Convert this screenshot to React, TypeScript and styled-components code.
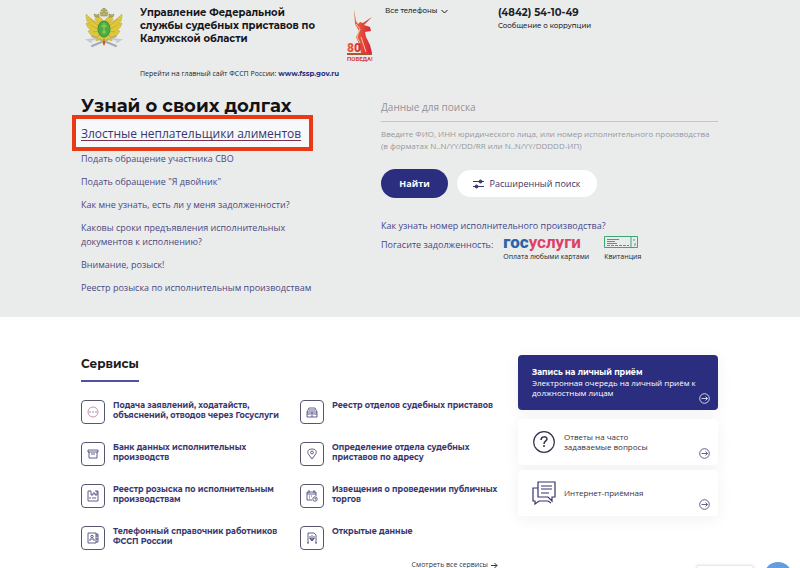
import React from "react";
import styled, { createGlobalStyle } from "styled-components";

const navy = "#2b2d7f";
const ink = "#39376e";
const body = '"Open Sans", "Noto Sans", sans-serif';
const display = 'Montserrat, Inter, "Noto Sans", sans-serif';

const GlobalStyle = createGlobalStyle`
  * { box-sizing: border-box; }
  body { margin: 0; background: #fff; font-family: ${body}; color: #1d1d25; }
  a { color: inherit; text-decoration: none; }
  button, input { font-family: inherit; }
  h1, h2, h3, p, ul { margin: 0; padding: 0; }
  ul { list-style: none; }
  svg { display: block; flex: none; }
`;

const Page = styled.div`
  height: 100vh;
  overflow: hidden;
`;

const Top = styled.div`
  background: #eaecec;
  padding: 0 82px 22px 81px;
`;

const Header = styled.header`
  display: grid;
  grid-template-columns: 59px 203px 42px 113px 1fr;
  align-items: start;
  padding-top: 6px;
`;

const Emblem = styled.div`
  padding: 2px 0 0 4px;
`;

const OfficeName = styled.h2`
  max-width: 181px;
  font: 700 10px/13px ${display};
  color: #15151a;
`;

const MainSite = styled.p`
  margin-top: 23px;
  font-size: 7px;
  line-height: 12px;
  white-space: nowrap;
  a { font: 700 7px/12px ${display}; color: ${navy}; }
`;

const PhonesButton = styled.button`
  display: flex;
  align-items: center;
  gap: 3px;
  padding: 0;
  border: 0;
  background: none;
  font: 500 7px/10px ${display};
  color: #1d1d25;
`;

const Phone = styled.a`
  display: block;
  font: 700 10px/13px ${display};
`;

const SmallLink = styled.a`
  display: block;
  font: 500 7px/14px ${display};
`;

const Hero = styled.main`
  display: grid;
  grid-template-columns: 300px 1fr;
  padding-top: 12px;
`;

const HeroTitle = styled.h1`
  font: 700 18px/28px ${display};
  color: #131316;
  white-space: nowrap;
`;

const Highlight = styled.a`
  display: block;
  width: fit-content;
  margin: -5px 0 0 -9px;
  padding: 6px 8px 4px 5px;
  border: 4px solid #e93a17;
  background: #f7f8f9;
  font-size: 12px;
  line-height: 18px;
  color: ${ink};
  text-decoration: underline;
  text-decoration-color: #783352;
  text-underline-offset: 2px;
  white-space: nowrap;
`;

const LinkList = styled.ul`
  display: grid;
  gap: 9px;
  padding-top: 1px;
  font-size: 9px;
  line-height: 14px;
  color: #4a487f;
`;

const LinkItem = styled.li`
  max-width: 240px;
`;

const SearchInput = styled.input`
  display: block;
  width: 100%;
  height: 30px;
  padding: 0;
  border: 0;
  border-bottom: 1px solid #c6c6c9;
  border-radius: 0;
  background: #ebebeb;
  font-size: 10px;
  &::placeholder { color: #939398; opacity: 1; }
`;

const Hint = styled.p`
  margin-top: 6px;
  font-size: 8px;
  line-height: 12px;
  color: #96979b;
`;

const Buttons = styled.div`
  display: flex;
  align-items: center;
  gap: 9px;
  margin-top: 17px;
`;

const SearchButton = styled.button<{ $primary?: boolean }>`
  display: flex;
  align-items: center;
  justify-content: center;
  gap: 5px;
  width: ${(p) => (p.$primary ? 67 : 140)}px;
  height: ${(p) => (p.$primary ? 29 : 27)}px;
  padding: 0;
  border: 0;
  border-radius: 15px;
  background: ${(p) => (p.$primary ? navy : "#fff")};
  color: ${(p) => (p.$primary ? "#fff" : ink)};
  font-size: 9px;
  font-weight: ${(p) => (p.$primary ? 700 : 400)};
`;

const Debt = styled.div`
  margin-top: 21px;
  font-size: 9px;
  line-height: 14px;
  color: #47478a;
`;

const PayRow = styled.div`
  display: flex;
  align-items: flex-start;
  gap: 10px;
  padding-top: 2px;
  white-space: nowrap;
`;

const PayLabel = styled.span`
  padding-top: 3px;
`;

const PayOption = styled.a`
  display: grid;
  grid-template-rows: 17px 10px;
  margin-right: 5px;
  color: #1d1d25;
  font-size: 7px;
  line-height: 10px;
`;

const Gosuslugi = styled.span`
  font: 700 17px/14px Roboto, sans-serif;
  color: #dd3f66;
  b { color: #2c64a8; }
`;

const Lower = styled.section`
  display: grid;
  grid-template-columns: 1fr 200px;
  gap: 20px;
  padding: 38px 82px 0 81px;
`;

const SectionTitle = styled.h2`
  width: fit-content;
  padding-bottom: 8px;
  border-bottom: 2px solid #5054a0;
  font: 700 12px/17px ${display};
  color: #1c1c20;
`;

const Services = styled.ul`
  display: grid;
  grid-template-columns: 219px 1fr;
  row-gap: 18px;
  padding-top: 18px;
`;

const Service = styled.li`
  display: grid;
  grid-template-columns: 24px 1fr;
  gap: 8px;
  height: 24px;
  color: ${ink};
`;

const IconBox = styled.span`
  display: grid;
  place-items: center;
  width: 24px;
  height: 24px;
  border: 1px solid #57566f;
  border-radius: 4px;
`;

const ServiceLink = styled.a`
  font: 700 8px/10px ${display};
  white-space: pre-line;
`;

const AllServices = styled.a`
  display: flex;
  align-items: center;
  justify-content: flex-end;
  gap: 3px;
  margin-top: 9px;
  font-size: 7px;
  line-height: 12px;
  color: #33334a;
`;

const Cards = styled.aside`
  display: flex;
  flex-direction: column;
`;

const Card = styled.a<{ $dark?: boolean }>`
  display: flex;
  align-items: center;
  gap: ${(p) => (p.$dark ? 0 : 8)}px;
  min-height: ${(p) => (p.$dark ? 55 : 46)}px;
  margin-bottom: ${(p) => (p.$dark ? 9 : 5)}px;
  padding: 0 8px 0 14px;
  border-radius: 4px;
  background: ${(p) => (p.$dark ? navy : "#fff")};
  color: ${(p) => (p.$dark ? "#fff" : "#33333b")};
  box-shadow: 0 3px 16px rgba(30, 30, 60, 0.06);
  font-size: 8px;
  line-height: 10px;
`;

const CardText = styled.span`
  flex: 1;
  white-space: pre-line;
  strong { display: block; font: 700 8px/11px ${display}; }
`;

const CardArrow = styled.span`
  align-self: flex-end;
  padding-bottom: 6px;
  color: ${(p) => p.color};
`;

const ChatDock = styled.aside`
  position: fixed;
  right: 8px;
  bottom: -22px;
  display: flex;
  gap: 10px;
`;

const ChatBubble = styled.div`
  width: 58px;
  height: 25px;
  margin-top: 3px;
  border: 1px solid #e8e8eb;
  border-radius: 3px;
  background: #fff;
  box-shadow: 0 0 3px rgba(0, 0, 0, 0.12);
`;

const ChatButton = styled.button`
  width: 28px;
  height: 28px;
  border: 0;
  border-radius: 50%;
  background: #609ee0;
`;

const Eagle = () => (
  <svg width="38" height="41" viewBox="0 0 38 41" aria-label="ФССП">
    <g stroke="#a6aab0" strokeWidth="2" strokeLinecap="round">
      <path d="M31 28 7 38M7 28l24 10" />
      <path d="m12 31-9 1 3 2M26 31l9 1-3 2" stroke="#c5c8cb" fill="none" />
    </g>
    <g fill="#ddc83c" stroke="#b79f34" strokeWidth=".5">
      <path d="M16 14C10 15 5 10 1 6c0 5 1 8 3 10-1 0-2-1-3-1 1 4 3 6 5 7l-3 1c2 4 6 6 9 6l6-5Z" />
      <path d="M22 14c6 1 11-4 15-8 0 5-1 8-3 10 1 0 2-1 3-1-1 4-3 6-5 7l3 1c-2 4-6 6-9 6l-6-5Z" />
      <path d="m14 27-3 6 5-2 3 6 3-6 5 2-3-6Z" />
      <path d="M17 16c-2-3-6-2-7-5 2-4 7-2 8 2h2c1-4 6-6 8-2-1 3-5 2-7 5Z" />
    </g>
    <g stroke="#bca13a" strokeWidth=".6">
      <path d="m5 11 10 8M5 17l10 5m18-11-10 8m10-2-10 5M7 24l8-1m16 1-8-1" />
    </g>
    <g fill="#b3b268" stroke="#8a8c45" strokeWidth=".6">
      <path d="m16 8-1-4 3 1V3h-2V2h2V0h2v2h2v1h-2v2l3-1-1 4Z" />
      <path d="m10 9-1-3 3 1 2-1v3Zm14 0V6l3 1 2-1-1 3Z" />
    </g>
    <ellipse cx="19" cy="21" rx="6" ry="8" fill="#48ad45" stroke="#3c9144" />
    <path d="M19 15v11m-3-8h6m-5 6h4" stroke="#b1ce51" />
    <path d="m19 29 1 6-1 3-1-3Z" fill="#b74d36" />
  </svg>
);

const Victory = () => (
  <svg width="27" height="55" viewBox="0 0 27 55" aria-label="80 Победа!">
    <defs><linearGradient id="victory"><stop stopColor="#e86c37" /><stop offset="1" stopColor="#d91f3b" /></linearGradient></defs>
    <path d="M7 1 9 13l2 3 2-2 3 1 9-6-8 8 6 2 1 4-6 1 1 5 4 8 2 8H14l-2-9-3-7 3-6-4-7Z" fill="url(#victory)" />
    <path d="m9 16 4 5-3 8 3 6M14 29l5 15" fill="none" stroke="#f5c3ad" strokeWidth="1" />
    <path d="M0 45h25v2H0z" fill="#a75a27" />
    <g fill="url(#victory)" fontFamily="Roboto" fontWeight="900"><text x="0" y="44" fontSize="12">80</text></g>
    <g fill="#dc3935" fontFamily="Roboto" fontWeight="700"><text x="0" y="53" fontSize="6">ПОБЕДА!</text></g>
  </svg>
);

const Arrow = () => (
  <svg width="7" height="7" viewBox="0 0 7 7" fill="none" stroke="currentColor"><path d="M0 3.5h6M3.5 1 6 3.5 3.5 6" /></svg>
);

const CircleArrow = () => (
  <svg width="11" height="11" viewBox="0 0 11 11" fill="none" stroke="currentColor" strokeWidth=".8"><circle cx="5.5" cy="5.5" r="4.8" /><path d="M2.5 5.5h6m-2-2 2 2-2 2" /></svg>
);

const shapes: Record<string, React.ReactNode> = {
  gos: <><circle cx="6" cy="6" r="5" stroke="#b87999" /><path d="M2 6h2m1 0h2m1 0h2" stroke="#8272a3" /></>,
  archive: <path d="M1 2h10v2H1Zm1 2v6h8V4M4 6h4" />,
  registry: <path d="M4 1H1v10h10V1H8M4 1v4h2V3h2v2h2V1M2 8h2m1 0h4" />,
  book: <><path d="M1 1h8v10H1Zm8 1h2v2H9m2 0v3H9m2 0v3H9M3 9V7h4v2" /><circle cx="5" cy="4.5" r="1.2" /></>,
  drawer: <path d="m1 6 2-4h6l2 4v5H1V6h10M3 4h6M1 8h10M5 7h2M5 10h2" />,
  pin: <><path d="M6 11 3 7C0 3 3 1 6 1s6 2 3 6Z" /><circle cx="6" cy="4.5" r="1.4" /></>,
  calendar: <><path d="M1 2h9v4M1 2v8h5M1 4h9M3 0v3m5-3v3M3 6h1m1 0h1M3 8h1" /><circle cx="9" cy="9" r="2.2" /><path d="M9 8v1h1" /></>,
  data: <path d="M2 11V1h6l2 2v8M1 11h2m6 0h2M4 4v3h4V4M6 3v6M4 6l2 3 2-3" />,
};

const ServiceIcon = ({ name }: { name: string }) => (
  <svg width="12" height="12" viewBox="0 0 12 12" fill="none" stroke="currentColor" strokeWidth=".8">{shapes[name]}</svg>
);

const services = [
  ["gos", "Подача заявлений, ходатайств,\nобъяснений, отводов через Госуслуги"],
  ["drawer", "Реестр отделов судебных приставов"],
  ["archive", "Банк данных исполнительных\nпроизводств"],
  ["pin", "Определение отдела судебных\nприставов по адресу"],
  ["registry", "Реестр розыска по исполнительным\nпроизводствам"],
  ["calendar", "Извещения о проведении публичных\nторгов"],
  ["book", "Телефонный справочник работников\nФССП России"],
  ["data", "Открытые данные"],
];

const links = [
  "Подать обращение участника СВО",
  'Подать обращение "Я двойник"',
  "Как мне узнать, есть ли у меня задолженности?",
  "Каковы сроки предъявления исполнительных документов к исполнению?",
  "Внимание, розыск!",
  "Реестр розыска по исполнительным производствам",
];

export default function App() {
  return (
    <Page>
      <GlobalStyle />
      <Top>
        <Header>
          <Emblem><Eagle /></Emblem>
          <div>
            <OfficeName>Управление Федеральной службы судебных приставов по Калужской области</OfficeName>
            <MainSite>Перейти на главный сайт ФССП России: <a href="#main">www.fssp.gov.ru</a></MainSite>
          </div>
          <Emblem><Victory /></Emblem>
          <PhonesButton>
            Все телефоны
            <svg width="7" height="5" viewBox="0 0 7 5" fill="none" stroke="currentColor"><path d="m.5 1 3 3 3-3" /></svg>
          </PhonesButton>
          <div>
            <Phone href="tel:+74842541049">(4842) 54-10-49</Phone>
            <SmallLink href="#corruption">Сообщение о коррупции</SmallLink>
          </div>
        </Header>
        <Hero>
          <div>
            <HeroTitle>Узнай о своих долгах</HeroTitle>
            <Highlight href="#alimony">Злостные неплательщики алиментов</Highlight>
            <LinkList>
              {links.map((text) => <LinkItem key={text}><a href="#info">{text}</a></LinkItem>)}
            </LinkList>
          </div>
          <div>
            <SearchInput aria-label="Данные для поиска" placeholder="Данные для поиска" />
            <Hint>Введите ФИО, ИНН юридического лица, или номер исполнительного производства<br />(в форматах N..N/YY/DD/RR или N..N/YY/DDDDD-ИП)</Hint>
            <Buttons>
              <SearchButton $primary>Найти</SearchButton>
              <SearchButton>
                <svg width="11" height="10" viewBox="0 0 11 10" fill="currentColor" stroke="currentColor"><path d="M0 2.5h11M0 7.5h11" /><circle cx="7.5" cy="2.5" r="1.5" /><circle cx="3.5" cy="7.5" r="1.5" /></svg>
                Расширенный поиск
              </SearchButton>
            </Buttons>
            <Debt>
              <a href="#number">Как узнать номер исполнительного производства?</a>
              <PayRow>
                <PayLabel>Погасите задолженность:</PayLabel>
                <PayOption href="#pay"><Gosuslugi><b>гос</b>услуги</Gosuslugi>Оплата любыми картами</PayOption>
                <PayOption href="#receipt">
                  <svg width="34" height="14" viewBox="0 0 34 14" fill="none" stroke="#3da678"><path d="M.5 1.5h33v11H.5ZM27 2v10M3 4.5h12M3 6.5h8M3 8.5h10M30 4v2m1 2v3" /><path d="M3 10.5h22" strokeDasharray="3 1" /></svg>
                  Квитанция
                </PayOption>
              </PayRow>
            </Debt>
          </div>
        </Hero>
      </Top>
      <Lower>
        <div>
          <SectionTitle>Сервисы</SectionTitle>
          <Services>
            {services.map(([icon, text]) => (
              <Service key={icon}>
                <IconBox><ServiceIcon name={icon} /></IconBox>
                <ServiceLink href={`#${icon}`}>{text}</ServiceLink>
              </Service>
            ))}
          </Services>
          <AllServices href="#services">Смотреть все сервисы <Arrow /></AllServices>
        </div>
        <Cards>
          <Card $dark href="#appointment">
            <CardText><strong>Запись на личный приём</strong>{"Электронная очередь на личный приём к\nдолжностным лицам"}</CardText>
            <CardArrow color="#fff"><CircleArrow /></CardArrow>
          </Card>
          <Card href="#faq">
            <svg width="24" height="24" viewBox="0 0 24 24" fill="none" stroke="#34344b" strokeWidth="1.2"><circle cx="12" cy="12" r="10.3" /><path d="M9 10c0-4 6-4 6-1 0 2-3 2-3 5m0 1v2" strokeWidth="1.5" /></svg>
            <CardText>{"Ответы на часто\nзадаваемые вопросы"}</CardText>
            <CardArrow color="#3d3b68"><CircleArrow /></CardArrow>
          </Card>
          <Card href="#reception">
            <svg width="24" height="24" viewBox="0 0 24 24" fill="none" stroke="#35346d" strokeWidth="1.2"><path d="M6 1h17v15h-3v4l-4-4H6ZM9 5h11M9 8h11M9 12h8M6 7H1v13h2v3l4-3h9l3 2" /></svg>
            <CardText>Интернет-приёмная</CardText>
            <CardArrow color="#3d3b68"><CircleArrow /></CardArrow>
          </Card>
        </Cards>
      </Lower>
      <ChatDock><ChatBubble /><ChatButton aria-label="Чат" /></ChatDock>
    </Page>
  );
}
